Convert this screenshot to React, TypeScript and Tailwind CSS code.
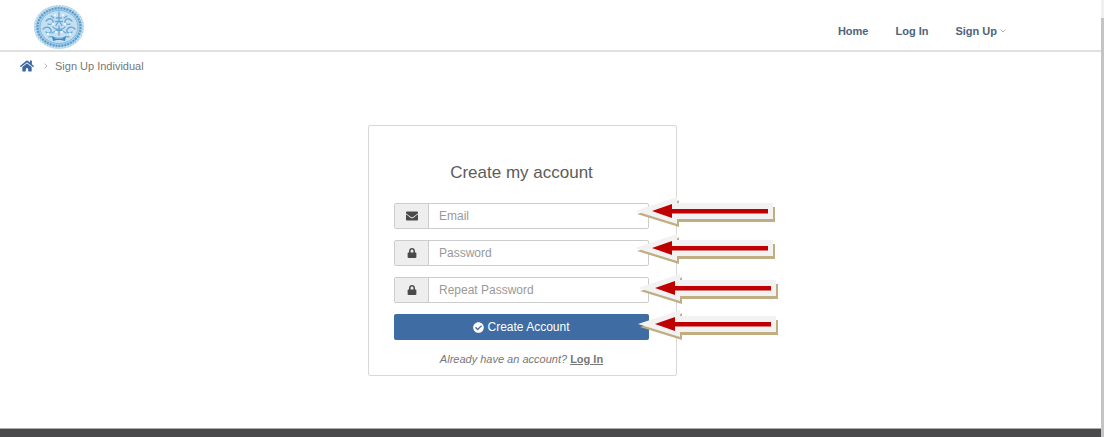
import React from "react";
import { FaCheckCircle, FaEnvelope, FaHome, FaLock } from "react-icons/fa";

function Logo() {
  return (
    <svg viewBox="0 0 52 46" className="h-[46px] w-[52px]" role="img" aria-label="Seal">
      <ellipse cx="26" cy="23" rx="25" ry="22" fill="#a9cfe8" />
      <ellipse cx="26" cy="23" rx="24.2" ry="21.2" fill="none" stroke="#d3e6f3" strokeWidth="2" strokeDasharray="1.5 1.5" />
      <ellipse cx="26" cy="23" rx="21.5" ry="18.8" fill="none" stroke="#5b9dcc" strokeWidth="2.2" strokeDasharray="2 1" />
      <ellipse cx="26" cy="23" rx="19" ry="16.5" fill="#c3dff1" stroke="#85b9dd" strokeWidth="1" />
      <g fill="none" stroke="#6aa8d4" strokeWidth="1.3" strokeLinecap="round">
        <path d="M26 8v8M23.500 14h5M22.500 17.500h7M23 21.500l3-5 3 5" />
        <path d="M13 17c3-3 6-3 7 0s-3 4-5 3M39 17c-3-3-6-3-7 0s3 4 5 3" />
        <path d="M10 25c3-3 7-2 8 1s-3 4-5 2M42 25c-3-3-7-2-8 1s3 4 5 2" />
        <path d="M20 23c2 3 10 3 12 0M19 29l7-4 7 4M26 22v9" />
        <path d="M16 33c4-2 6 3 10 1 4 2 6-3 10-1M18 12l3 2M34 12l-3 2" />
      </g>
      <path d="M19 32l4 3h6l4-3-1 5-4-1h-4l-4 1z" fill="#3f89c2" />
      <g fill="#e9f4fb">
        <circle cx="20" cy="20" r="1.300" />
        <circle cx="32" cy="20" r="1.300" />
        <circle cx="15" cy="30" r="1.300" />
        <circle cx="37" cy="30" r="1.300" />
        <circle cx="23" cy="28" r="1.200" />
        <circle cx="29" cy="28" r="1.200" />
        <circle cx="22" cy="11" r="1.200" />
        <circle cx="30" cy="11" r="1.200" />
      </g>
    </svg>
  );
}

function Arrow({ className }: { className: string }) {
  return (
    <svg
      viewBox="0 0 144 36"
      aria-hidden="true"
      className={"pointer-events-none absolute z-10 h-9 w-36 max-w-none " + className}
    >
      <path d="M0 14 42 1v6h96v15H42v5z" fill="#c0ae82" transform="translate(2 3)" />
      <path d="M0 14 42 0v6h96v16H42v5z" fill="#f2f2f2" />
      <path d="M42.500 3.500h1.500v2h-1.500z" fill="#b9ad98" />
      <path d="M17 14 37 7v5h96v4.500H37v4.500z" fill="#c00000" />
    </svg>
  );
}

type FieldProps = {
  id: string;
  label: string;
  type: string;
  icon: React.ReactNode;
  arrow: string;
};

function Field({ id, label, type, icon, arrow }: FieldProps) {
  return (
    <div className="relative flex h-[26px] rounded-xs border border-[#cccccc] bg-white">
      <label
        htmlFor={id}
        aria-label={label}
        className="flex w-[34px] shrink-0 items-center justify-center border-r border-[#cccccc] bg-[#eeeeee] text-[#4a4a4a]"
      >
        {icon}
      </label>
      <input
        id={id}
        type={type}
        placeholder={label}
        className="min-w-0 flex-1 bg-transparent px-[10px] text-[12px] text-[#555555] outline-none placeholder:text-[#999999]"
      />
      <Arrow className={arrow} />
    </div>
  );
}

export default function App() {
  return (
    <div className="flex min-h-screen bg-white font-['Liberation_Sans',Arial,sans-serif] text-[#777777]">
      <div className="flex min-w-0 flex-1 flex-col">
        <header className="flex h-[52px] items-center justify-between border-b-2 border-[#e0e0e0] pr-[95px] pl-[33px]">
          <a href="#home" className="mt-1">
            <Logo />
          </a>
          <nav className="mt-3 flex items-center gap-[27px] text-[11px] font-bold text-[#4d647c]">
            <a href="#home">Home</a>
            <a href="#login">Log In</a>
            <a href="#signup" className="flex items-center gap-[3px]">
              Sign Up
              <svg viewBox="0 0 6 4" className="h-1 w-[6px]" fill="none" stroke="#a9b4c0" aria-hidden="true">
                <path d="M.5.5 3 3 5.500.5" />
              </svg>
            </a>
          </nav>
        </header>

        <nav aria-label="Breadcrumb" className="flex h-7 items-center pl-5 text-[11px]">
          <a href="#home" aria-label="Home" className="text-[#3c66a0]">
            <FaHome size={14} />
          </a>
          <svg viewBox="0 0 4 6" className="ml-[10px] h-[6px] w-1" fill="none" stroke="#bbbbbb" aria-hidden="true">
            <path d="M.5.5 3 3 .5 5.500" />
          </svg>
          <span className="ml-[7px]">Sign Up Individual</span>
        </nav>

        <main className="flex flex-1 justify-center pt-[45px] pr-14 pb-[51px]">
          <form
            onSubmit={(event) => event.preventDefault()}
            className="flex w-[309px] flex-col gap-[11px] self-start rounded-xs border border-[#d8d8d8] pt-9 pr-[27px] pb-2 pl-[25px]"
          >
            <h1 className="mb-2 text-center text-[17px] leading-[22px] text-[#5c5c5c]">Create my account</h1>
            <Field id="email" label="Email" type="email" icon={<FaEnvelope size={12} />} arrow="-top-[7px] left-[240px]" />
            <Field id="password" label="Password" type="password" icon={<FaLock size={10} />} arrow="-top-[7px] left-[240px]" />
            <Field id="repeat" label="Repeat Password" type="password" icon={<FaLock size={10} />} arrow="-top-1 left-[243px]" />
            <div className="relative">
              <button
                type="submit"
                className="flex h-[26px] w-full items-center justify-center gap-[3px] rounded-xs bg-[#3e6ca3] text-[12px] text-white"
              >
                <FaCheckCircle size={11} />
                Create Account
              </button>
              <Arrow className="-top-1 left-[244px]" />
            </div>
            <p className="text-center text-[11px] leading-4">
              <em>Already have an account?</em>{" "}
              <a href="#login" className="font-bold underline">
                Log In
              </a>
            </p>
          </form>
        </main>

        <footer className="h-[9px] border-t border-[#a9adad] bg-[#4a4a4d]" />
      </div>
      <div className="flex w-[3px] flex-col bg-[#f0f0f0] pt-[18px]" aria-hidden="true">
        <div className="flex-1 bg-[#c4c4c4]" />
      </div>
    </div>
  );
}
